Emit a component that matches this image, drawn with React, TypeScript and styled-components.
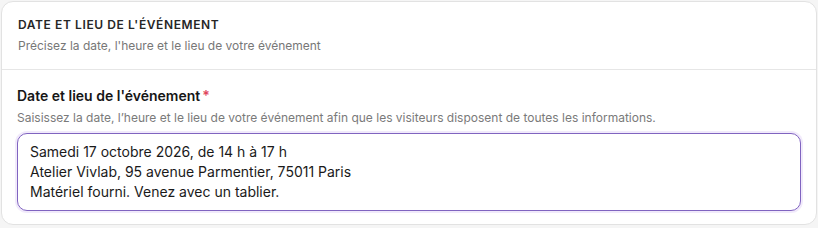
import styled, {createGlobalStyle} from "styled-components";

const GlobalStyle = createGlobalStyle`
  html, body {
    margin: 0;
    padding: 0;
    background: #f5f5f5;
    font-family: Inter, "Liberation Sans", sans-serif;
  }
`;

const Page = styled.div`
  padding: 1px 1px 2px 1px;
`;

const Card = styled.section`
  background: #ffffff;
  border: 1px solid #e2e2e2;
  border-radius: 12px;
  overflow: hidden;
`;

const CardHeader = styled.header`
  padding: 15px 16px 15px;
  border-bottom: 1px solid #e6e6e6;
`;

const SectionTitle = styled.h2`
  margin: 0;
  font-size: 12px;
  line-height: 16px;
  font-weight: 600;
  letter-spacing: 0.6px;
  color: #262626;
  text-transform: uppercase;
`;

const SectionHint = styled.p`
  margin: 5px 0 0;
  font-size: 12px;
  line-height: 16px;
  color: #777777;
`;

const CardBody = styled.div`
  padding: 17px 15px 13px;
`;

const Label = styled.label`
  display: block;
  font-size: 14px;
  line-height: 18px;
  font-weight: 600;
  color: #161616;
`;

const Required = styled.span`
  color: #e0455c;
  margin-left: 2px;
`;

const FieldHint = styled.p`
  margin: 5px 0 7px;
  font-size: 12px;
  line-height: 16px;
  color: #7a7a7a;
`;

const TextArea = styled.textarea`
  display: block;
  box-sizing: border-box;
  width: 100%;
  height: 78px;
  margin: 0;
  padding: 8px 12px;
  resize: none;
  border: 1px solid #8064c0;
  border-radius: 10px;
  box-shadow: 0 0 0 2px #f1eafb;
  font-family: Inter, "Liberation Sans", sans-serif;
  font-size: 14px;
  line-height: 20px;
  color: #1a1a1a;
  background: #ffffff;
  outline: none;
`;

const value = `Samedi 17 octobre 2026, de 14 h à 17 h
Atelier Vivlab, 95 avenue Parmentier, 75011 Paris
Matériel fourni. Venez avec un tablier.`;

function App() {
    return (
        <Page>
            <GlobalStyle/>
            <Card>
                <CardHeader>
                    <SectionTitle>Date et lieu de l'événement</SectionTitle>
                    <SectionHint>Précisez la date, l'heure et le lieu de votre événement</SectionHint>
                </CardHeader>
                <CardBody>
                    <Label htmlFor="event-place">
                        Date et lieu de l'événement<Required>*</Required>
                    </Label>
                    <FieldHint>
                        Saisissez la date, l’heure et le lieu de votre événement afin que les visiteurs disposent de toutes les informations.
                    </FieldHint>
                    <TextArea id="event-place" defaultValue={value}/>
                </CardBody>
            </Card>
        </Page>
    );
}

export default App;
